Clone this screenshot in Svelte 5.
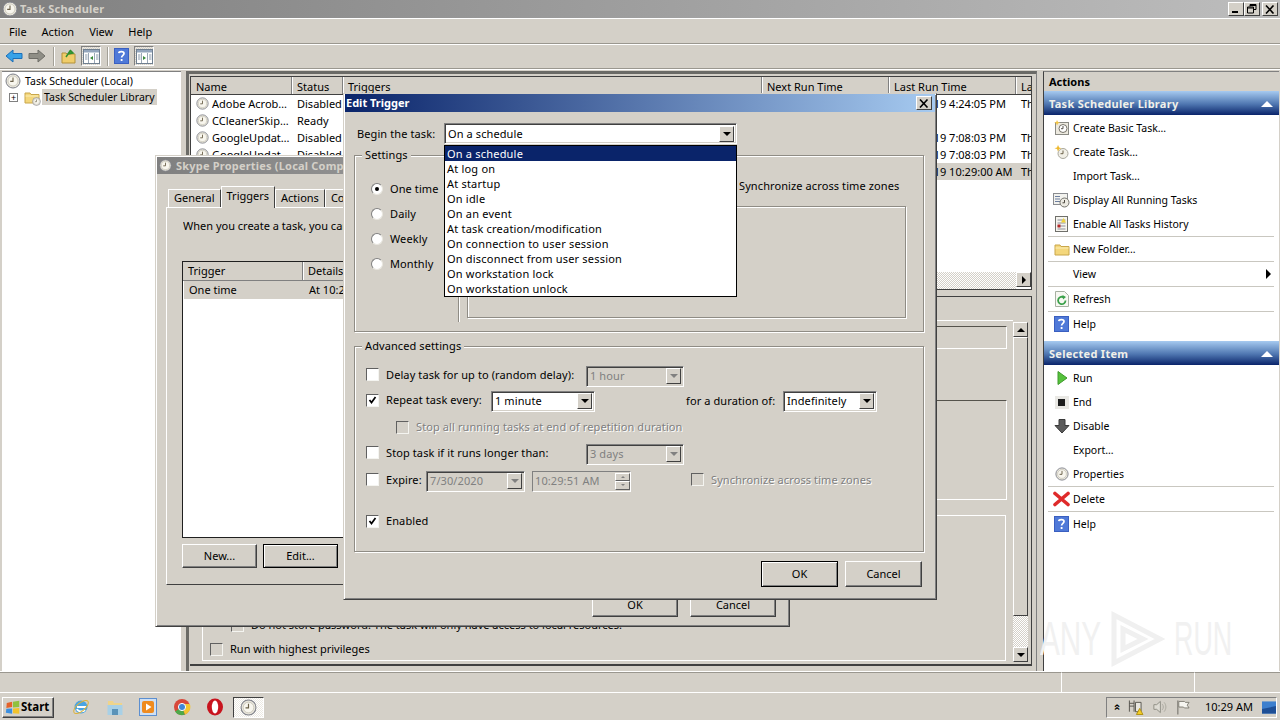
<script lang="ts">
  const menus = ['File', 'Action', 'View', 'Help'];

  const tasks = [
    { name: 'Adobe Acrob…', status: 'Disabled', last: '6/24/2019 4:24:05 PM', res: 'Th' },
    { name: 'CCleanerSkip…', status: 'Ready', last: '', res: '' },
    { name: 'GoogleUpdat…', status: 'Disabled', last: '7/29/2019 7:08:03 PM', res: 'Th' },
    { name: 'GoogleUpdat…', status: 'Disabled', last: '7/29/2019 7:08:03 PM', res: 'Th' },
    { name: 'Skype', status: 'Ready', last: '7/29/2019 10:29:00 AM', res: 'Th', selected: true }
  ];

  const libraryActions = [
    { label: 'Create Basic Task…', icon: 'basic' },
    { label: 'Create Task…', icon: 'create' },
    { label: 'Import Task…' },
    { label: 'Display All Running Tasks', icon: 'running' },
    { label: 'Enable All Tasks History', icon: 'history', sep: true },
    { label: 'New Folder…', icon: 'folder', sep: true },
    { label: 'View', arrow: true, sep: true },
    { label: 'Refresh', icon: 'refresh', sep: true },
    { label: 'Help', icon: 'help' }
  ];

  const itemActions = [
    { label: 'Run', icon: 'run' },
    { label: 'End', icon: 'end' },
    { label: 'Disable', icon: 'disable' },
    { label: 'Export…' },
    { label: 'Properties', icon: 'props', sep: true },
    { label: 'Delete', icon: 'delete', sep: true },
    { label: 'Help', icon: 'help' }
  ];

  const triggerKinds = [
    'On a schedule',
    'At log on',
    'At startup',
    'On idle',
    'On an event',
    'At task creation/modification',
    'On connection to user session',
    'On disconnect from user session',
    'On workstation lock',
    'On workstation unlock'
  ];

  const schedules = ['One time', 'Daily', 'Weekly', 'Monthly'];
</script>

{#snippet clock(size: number)}
  <svg width={size} height={size} viewBox="0 0 16 16" class="icon">
    <circle cx="8" cy="8" r="7" fill="#e9e6dc" stroke="#7d7f88" />
    <circle cx="8" cy="8" r="5" fill="#f8f6ee" stroke="#b9b7a8" stroke-width=".6" />
    <path d="M8 4.5V8.4H5.2" fill="none" stroke="#6a6048" stroke-width="1.1" />
  </svg>
{/snippet}

{#snippet folder(size: number)}
  <svg width={size} height={size} viewBox="0 0 16 16" class="icon">
    <path d="M1 4h5l1 1.5h8V14H1z" fill="#f4d77c" stroke="#c9a64a" />
    <path d="M1.5 7h13" stroke="#fbeeb8" />
  </svg>
{/snippet}

{#snippet helpIcon()}
  <svg width="15" height="16" viewBox="0 0 15 16" class="icon">
    <rect width="15" height="16" fill="#3a5fc0" />
    <rect x="1" y="1" width="13" height="14" fill="#4f79d8" />
    <path d="M4.8 5.2C5 3.2 10 3 10 5.6 10 7.4 7.6 7.4 7.6 9.6" fill="none" stroke="#fff" stroke-width="1.7" />
    <rect x="6.7" y="11" width="1.8" height="2" fill="#fff" />
  </svg>
{/snippet}

{#snippet actionIcon(name: string)}
  {#if name === 'help'}
    {@render helpIcon()}
  {:else if name === 'basic'}
    <svg width="16" height="16" viewBox="0 0 16 16" class="icon">
      <rect x="1.5" y="2.5" width="13" height="12" fill="#ece9df" stroke="#8a8a84" />
      <circle cx="9" cy="8.5" r="4" fill="#fff" stroke="#77736a" />
      <path d="M9 6v2.7H7" fill="none" stroke="#55504a" />
      <path d="M3 0l1 2 2 .6-2 .8-1 2-.8-2-2-.8 2-.6z" fill="#f3c648" />
    </svg>
  {:else if name === 'create'}
    <svg width="16" height="16" viewBox="0 0 16 16" class="icon">
      <circle cx="9" cy="9.5" r="5" fill="#f1efe6" stroke="#a9a79c" />
      <path d="M9 6.5v3.2H6.5" fill="none" stroke="#6a6048" />
      <path d="M4 1l1.2 2.4 2.4.8-2.4.9L4 7.6 3 5.1.5 4.2 3 3.4z" fill="#eeb92f" />
    </svg>
  {:else if name === 'running'}
    <svg width="17" height="16" viewBox="0 0 17 16" class="icon">
      <rect x=".5" y="1.5" width="14" height="11" fill="#f2f2ee" stroke="#8a8c90" />
      <path d="M2 4.5h5M2 7h5M2 9.500h5" stroke="#6d7fa0" />
      <circle cx="11.500" cy="10.500" r="4.500" fill="#eceae2" stroke="#74736c" />
      <path d="M11.500 8v2.800H9.500" fill="none" stroke="#4a463e" />
    </svg>
  {:else if name === 'history'}
    <svg width="15" height="16" viewBox="0 0 15 16" class="icon">
      <rect x="1.500" y=".5" width="12" height="15" fill="#f6f5ef" stroke="#6f6f6a" />
      <path d="M3.500 4h8M3.500 7h8M3.500 10h8M3.500 13h8" stroke="#8d8d99" />
      <rect x="3.500" y="8.500" width="3" height="3" fill="#b52a2a" />
      <path d="M9.500 2l2.500 4.500H7z" fill="#efd33a" />
    </svg>
  {:else if name === 'folder'}
    {@render folder(16)}
  {:else if name === 'refresh'}
    <svg width="14" height="16" viewBox="0 0 14 16" class="icon">
      <path d="M.5.500h9l4 4v11H.500z" fill="#f7f8f2" stroke="#a7b0a2" />
      <path d="M10.500 9.500A3.700 3.700 0 1 1 9 6.500" fill="none" stroke="#3aa04a" stroke-width="1.800" />
      <path d="M7.500 4l3.500 2-3 2.500z" fill="#3aa04a" />
    </svg>
  {:else if name === 'run'}
    <svg width="16" height="16" viewBox="0 0 16 16" class="icon">
      <path d="M4 1.500l9 6.500-9 6.500z" fill="#56c23c" stroke="#3f9a2c" />
    </svg>
  {:else if name === 'end'}
    <svg width="16" height="16" viewBox="0 0 16 16" class="icon">
      <rect x="1" y="2" width="14" height="13" fill="#e9e8e4" />
      <rect x="4" y="5" width="7" height="7" fill="#1d1d1d" />
    </svg>
  {:else if name === 'disable'}
    <svg width="16" height="16" viewBox="0 0 16 16" class="icon">
      <path d="M5 1.500h6v6h4l-7 7.500-7-7.500h4z" fill="#5c5c5c" stroke="#3a3a3a" />
    </svg>
  {:else if name === 'props'}
    {@render clock(14)}
  {:else if name === 'delete'}
    <svg width="17" height="16" viewBox="0 0 17 16" class="icon">
      <path d="M2 2.500l13 11M15 2.500l-13 11" stroke="#df2a2a" stroke-width="3.600" stroke-linecap="round" />
    </svg>
  {/if}
{/snippet}

{#snippet combo(text: string, width: number, disabled = false)}
  <div class="combo" class:disabled style="width: {width}px">
    <span class="combo-text">{text}</span>
    <span class="drop-btn"><i class="tri-down"></i></span>
  </div>
{/snippet}

{#snippet check(label: string, checked = false, disabled = false)}
  <label class="check" class:disabled>
    <span class="box">
      {#if checked}
        <svg width="11" height="11" viewBox="0 0 11 11"><path d="M2.500 5l2 2.500 4-5.500" fill="none" stroke="#000" stroke-width="1.700" /></svg>
      {/if}
    </span>
    <span>{label}</span>
  </label>
{/snippet}

{#snippet actionSection(title: string, items: any[])}
  <div class="section-head">
    <span>{title}</span>
    <i class="tri-up"></i>
  </div>
  <ul class="action-list">
    {#each items as item}
      <li class:sep={item.sep}>
        <span class="action-icon">
          {#if item.icon}{@render actionIcon(item.icon)}{/if}
        </span>
        <span class="action-label">{item.label}</span>
        {#if item.arrow}<i class="tri-right"></i>{/if}
      </li>
    {/each}
  </ul>
{/snippet}

<div class="screen">
  <header class="titlebar">
    {@render clock(16)}
    <span class="title-text">Task Scheduler</span>
    <div class="caption-btns">
      <button class="cap"><i class="min"></i></button>
      <button class="cap">
        <svg width="10" height="10" viewBox="0 0 10 10"><path d="M3 2.500V.5h6v5H7M.5 3h6v6h-6z" fill="none" stroke="#000" /><path d="M.5 4h6M3 1.500h6" stroke="#000" /></svg>
      </button>
      <button class="cap close">
        <svg width="10" height="9" viewBox="0 0 10 9"><path d="M1 .5l7.500 8M8.500 .5L1 8.500" stroke="#000" stroke-width="1.600" /></svg>
      </button>
    </div>
  </header>

  <nav class="menubar">
    {#each menus as m}<span>{m}</span>{/each}
  </nav>

  <div class="toolbar">
    <svg width="18" height="16" viewBox="0 0 18 16" class="tool"><path d="M1 8l7-6v3.500h9v5H8V14z" fill="#37a2e8" stroke="#1d6fb8" /></svg>
    <svg width="18" height="16" viewBox="0 0 18 16" class="tool fwd"><path d="M17 8l-7-6v3.500H1v5h9V14z" fill="#8f8e86" stroke="#6f6e68" /></svg>
    <span class="tool-sep"></span>
    <svg width="16" height="16" viewBox="0 0 16 16" class="tool up">
      <path d="M1 5h4l1 1h8v9H1z" fill="#f0cd6a" stroke="#b3913a" />
      <path d="M5 9l4-6M9 2l3 3-5 1" fill="#3da63d" stroke="#2f8f2f" stroke-width="1.500" />
    </svg>
    <span class="pressed first">
      <svg width="17" height="15" viewBox="0 0 17 15"><rect x=".5" y=".5" width="16" height="14" fill="#fff" stroke="#6f7f90" /><rect x="1" y="1" width="15" height="2.500" fill="#93a5bc" /><path d="M5.500 4v10M11.500 4v10" stroke="#9aa7b6" /><path d="M10 7l-3 2 3 2z" fill="#3a8a3a" /><path d="M2 6h2.500M2 8h2.500M2 10h2.500M13 6h2.500M13 8h2.500M13 10h2.500" stroke="#8898aa" /></svg>
    </span>
    <span class="tool-sep"></span>
    <span class="tool help">{@render helpIcon()}</span>
    <span class="pressed">
      <svg width="17" height="15" viewBox="0 0 17 15"><rect x=".5" y=".5" width="16" height="14" fill="#fff" stroke="#6f7f90" /><rect x="1" y="1" width="15" height="2.500" fill="#93a5bc" /><path d="M5.500 4v10M11.500 4v10" stroke="#9aa7b6" /><path d="M7 7l3 2-3 2z" fill="#3a8a3a" /><path d="M2 6h2.500M2 8h2.500M2 10h2.500M13 6h2.500M13 8h2.500M13 10h2.500" stroke="#8898aa" /></svg>
    </span>
  </div>

  <main class="workspace">
    <aside class="tree">
      <div class="tree-root">{@render clock(16)}<span>Task Scheduler (Local)</span></div>
      <div class="tree-item">
        <span class="expander">+</span>
        <span class="tree-folder">
          {@render folder(16)}
          <span class="mini-clock">{@render clock(9)}</span>
        </span>
        <span class="tree-label">Task Scheduler Library</span>
      </div>
    </aside>

    <section class="center">
      <div class="task-list">
        <div class="row head">
          <span>Name</span><span>Status</span><span>Triggers</span><span>Next Run Time</span><span>Last Run Time</span><span>La</span>
        </div>
        {#each tasks as t}
          <div class="row" class:selected={t.selected}>
            <span class="name">{@render clock(13)}{t.name}</span>
            <span>{t.status}</span>
            <span></span>
            <span></span>
            <span>{t.last}</span>
            <span>{t.res}</span>
          </div>
        {/each}
        <div class="hscroll">
          <span class="dither"></span>
          <button class="sb-btn"><i class="tri-right small"></i></button>
        </div>
      </div>

      <div class="detail">
        <div class="detail-page">
          <div class="panel p1"></div>
          <div class="panel p2"></div>
          <div class="panel p3">
            <div class="p3-rows">
              {@render check('Do not store password.  The task will only have access to local resources.')}
              <div class="highest">{@render check('Run with highest privileges')}</div>
            </div>
          </div>
        </div>
        <div class="vscroll">
          <button class="sb-btn"><i class="tri-up dark"></i></button>
          <span class="sb-thumb"></span>
          <span class="dither"></span>
          <button class="sb-btn"><i class="tri-down"></i></button>
        </div>
      </div>
    </section>

    <aside class="actions">
      <div class="actions-title">Actions</div>
      {@render actionSection('Task Scheduler Library', libraryActions)}
      <div class="gap"></div>
      {@render actionSection('Selected Item', itemActions)}
    </aside>
  </main>

  <div class="statusbar">
    <span class="status-cell grow"></span>
    <span class="status-cell mid"></span>
    <span class="status-cell end"></span>
  </div>

  <footer class="taskbar">
    <button class="start">
      <svg width="16" height="15" viewBox="0 0 18 16">
        <path d="M2 3l6-1.500v6L1.500 8.500z" fill="#e4622a" />
        <path d="M9 1.500l7 -1v7l-7 .5z" fill="#8fc13e" />
        <path d="M1.500 9.500L8 9v6l-7 -1z" fill="#3b8fe0" />
        <path d="M9 9l7 -.5V15l-7-.5z" fill="#f2c32c" />
      </svg>
      <b>Start</b>
    </button>

    <div class="quick">
      <svg width="18" height="18" viewBox="0 0 18 18"><circle cx="9" cy="9" r="6.500" fill="#4aa4e2" /><path d="M5 9h9M5 11c1 3 6 3 8 1" stroke="#fff" stroke-width="1.800" fill="none" /><ellipse cx="9" cy="9" rx="9" ry="4" fill="none" stroke="#dcb23a" transform="rotate(-40 9 9)" /></svg>
      <svg width="18" height="18" viewBox="0 0 18 18"><path d="M2 3h5l1 2h8v4H2z" fill="#efd48a" /><rect x="1.500" y="7" width="15" height="10" fill="#a8d0e6" /><rect x="6" y="11" width="6" height="6" fill="#5b93b8" /></svg>
      <svg width="18" height="18" viewBox="0 0 18 18"><rect x=".5" y=".5" width="17" height="17" fill="#cfe0f4" stroke="#5c8fd0" /><rect x="3" y="3" width="12" height="12" rx="2" fill="#ef8b1f" /><path d="M7 5.500L12.500 9 7 12.500z" fill="#fff" /></svg>
      <svg width="18" height="18" viewBox="0 0 18 18"><circle cx="9" cy="9" r="8" fill="#d8483a" /><path d="M9 9L2 13.500A8 8 0 0 0 12 16.500z" fill="#4ea848" /><path d="M9 9l3 7.500A8 8 0 0 0 16.800 6H9z" fill="#f2c530" /><circle cx="9" cy="9" r="3.600" fill="#3f86d8" stroke="#fff" /></svg>
      <svg width="18" height="18" viewBox="0 0 18 18"><ellipse cx="9" cy="9" rx="8" ry="8.500" fill="#c8141e" /><ellipse cx="9" cy="9" rx="3.200" ry="6.500" fill="#fff" /></svg>
    </div>
    <span class="task-active">{@render clock(17)}</span>

    <div class="tray">
      <span class="tray-chevron">»</span>
      <svg width="17" height="17" viewBox="0 0 17 17"><path d="M1.500 1v12M6.500 1v12M1.500 4h5M1.500 7h5" stroke="#55534c" fill="none" /><path d="M8 3h6v10H8z" fill="#e8e6df" stroke="#55534c" /><path d="M9 16l3.500-6.500L16 16z" fill="#f2cc24" stroke="#b08f10" /></svg>
      <svg width="17" height="16" viewBox="0 0 17 16"><path d="M2 5.500h3l4-3.500v12L5 10.500H2z" fill="#dedcd4" stroke="#8f8d84" /><path d="M11 5c1.500 2 1.500 4 0 6M13 3c2.500 3 2.500 7 0 10" fill="none" stroke="#a9a79e" /></svg>
      <svg width="16" height="17" viewBox="0 0 16 17"><path d="M2 1v15" stroke="#66645c" /><path d="M3 2h6l1 1h4l-2 3 2 3H9l-1-1H3z" fill="#f6f5f0" stroke="#7d7b72" /></svg>
      <span class="clock-text">10:29 AM</span>
      <svg width="15" height="13" viewBox="0 0 15 13"><rect width="15" height="13" fill="#3d7fce" /><path d="M0 8l15-3v8H0z" fill="#1e4f96" /></svg>
    </div>
  </footer>

  <section class="win skype">
    <div class="win-title inactive">
      {@render clock(13)}
      <span>Skype Properties (Local Computer)</span>
    </div>
    <div class="skype-body">
      <div class="tabs">
        <span class="tab">General</span>
        <span class="tab active">Triggers</span>
        <span class="tab">Actions</span>
        <span class="tab">Conditions</span>
      </div>
      <div class="tab-page">
        <p class="intro">When you create a task, you can specify the conditions that will trigger the task.</p>
        <div class="trigger-list">
          <div class="trigger-head"><span>Trigger</span><span>Details</span></div>
          <div class="trigger-row"><span>One time</span><span>At 10:29 AM on 7/29/2019</span></div>
        </div>
        <div class="list-btns">
          <button class="btn">New...</button>
          <button class="btn default">Edit...</button>
        </div>
      </div>
      <div class="win-footer">
        <button class="btn short">OK</button>
        <button class="btn short">Cancel</button>
      </div>
    </div>
  </section>

  <section class="win edit">
    <div class="win-title active-title">
      <span>Edit Trigger</span>
      <button class="cap small-close">
        <svg width="10" height="9" viewBox="0 0 10 9"><path d="M1 .5l7.500 8M8.500 .5L1 8.500" stroke="#000" stroke-width="1.600" /></svg>
      </button>
    </div>
    <div class="edit-body">
      <div class="begin-row">
        <span class="begin-label">Begin the task:</span>
        {@render combo('On a schedule', 293)}
      </div>

      <div class="group settings">
        <span class="legend">Settings</span>
        <div class="radios">
          {#each schedules as s, i}
            <label class="radio">
              <span class="dot" class:on={i === 0}></span>
              <span>{s}</span>
            </label>
          {/each}
        </div>
        <span class="vline"></span>
        <div class="settings-right">
          <div class="sync">Synchronize across time zones</div>
          <div class="recur-box"></div>
        </div>
      </div>

      <div class="group advanced">
        <span class="legend">Advanced settings</span>
        <div class="adv-row first-row">
          <span class="col-a">{@render check('Delay task for up to (random delay):')}</span>
          {@render combo('1 hour', 98, true)}
        </div>
        <div class="adv-row">
          <span class="col-repeat">{@render check('Repeat task every:', true)}</span>
          {@render combo('1 minute', 104)}
          <span class="duration">for a duration of:</span>
          {@render combo('Indefinitely', 94)}
        </div>
        <div class="adv-row indent">
          {@render check('Stop all running tasks at end of repetition duration', false, true)}
        </div>
        <div class="adv-row stop">
          <span class="col-a">{@render check('Stop task if it runs longer than:')}</span>
          {@render combo('3 days', 98, true)}
        </div>
        <div class="adv-row expire">
          <span class="col-expire">{@render check('Expire:')}</span>
          {@render combo('7/30/2020', 99, true)}
          <div class="spin-field">
            <span>10:29:51 AM</span>
            <span class="spin"><i class="spin-up"></i><i class="spin-down"></i></span>
          </div>
          <span class="expire-sync">{@render check('Synchronize across time zones', false, true)}</span>
        </div>
        <div class="adv-row enabled">{@render check('Enabled', true)}</div>
      </div>

      <div class="win-footer edit-footer">
        <button class="btn default wide">OK</button>
        <button class="btn wide">Cancel</button>
      </div>
    </div>
  </section>

  <ul class="dropdown">
    {#each triggerKinds as kind, i}
      <li class:hl={i === 0}>{kind}</li>
    {/each}
  </ul>

  <div class="watermark" aria-hidden="true">
    <span class="wm-word">ANY</span>
    <svg width="58" height="60" viewBox="0 0 58 60"><path d="M6 6v48l46-24z M15 20v20l20-10z" fill="none" stroke="#f0f0f0" stroke-width="5" /></svg>
    <span class="wm-word run">RUN</span>
  </div>
</div>

<style>
  :global(body) {
    margin: 0;
    background: #d4d0c8;
  }

  .screen {
    position: relative;
    width: 1280px;
    height: 720px;
    overflow: hidden;
    display: flex;
    flex-direction: column;
    background: #d4d0c8;
    color: #000;
    font-family: 'Noto Sans', 'DejaVu Sans', sans-serif;
    font-size: 11px;
    line-height: 14px;
  }

  button {
    font: inherit;
    color: inherit;
    padding: 0;
    margin: 0;
    background: #d4d0c8;
  }

  ul {
    list-style: none;
    margin: 0;
    padding: 0;
  }

  .icon {
    flex: none;
    display: block;
  }

  .tri-down,
  .tri-up,
  .tri-right {
    display: block;
    width: 0;
    height: 0;
    border-style: solid;
    border-color: transparent;
  }

  .tri-down {
    border-width: 4px 4px 0;
    border-top-color: #000;
  }

  .tri-up {
    border-width: 0 6px 6px;
    border-bottom-color: #fff;
  }

  .tri-up.dark {
    border-width: 0 4px 4px;
    border-bottom-color: #000;
  }

  .tri-right {
    border-width: 5px 0 5px 5px;
    border-left-color: #000;
  }

  .tri-right.small {
    border-width: 4px 0 4px 4px;
  }

  /* main window chrome */
  .titlebar {
    height: 18px;
    display: flex;
    align-items: center;
    gap: 2px;
    padding-left: 2px;
    background: linear-gradient(90deg, #808080, #bdbdbd);
    border-bottom: 1px solid #fff;
    flex: none;
  }

  .title-text {
    font-weight: 700;
    color: #d4d0c8;
    letter-spacing: 0.2px;
  }

  .caption-btns {
    margin-left: auto;
    display: flex;
    margin-right: 2px;
  }

  .cap {
    width: 16px;
    height: 14px;
    display: flex;
    align-items: center;
    justify-content: center;
    border: 1px solid;
    border-color: #fff #404040 #404040 #fff;
  }

  .caption-btns .close {
    margin-left: 2px;
  }

  .min {
    display: block;
    width: 6px;
    height: 2px;
    background: #000;
    margin-top: 6px;
    margin-right: 2px;
  }

  .menubar {
    height: 25px;
    box-sizing: border-box;
    display: flex;
    align-items: center;
    padding: 1px 0 0 9px;
    gap: 15px;
    flex: none;
    border-bottom: 1px solid #9a978f;
    box-shadow: inset 0 -1px 0 #d4d0c8, 0 1px 0 #fff;
  }

  .toolbar {
    height: 24px;
    display: flex;
    align-items: center;
    flex: none;
    padding-left: 5px;
    border-bottom: 1px solid #9a978f;
    box-shadow: 0 1px 0 #fff;
  }

  .tool-sep {
    width: 1px;
    height: 19px;
    background: #a3a097;
    box-shadow: 1px 0 0 #fff;
  }

  .fwd {
    margin-left: 5px;
    margin-right: 7px;
  }

  .up {
    margin-left: 7px;
  }

  .pressed {
    width: 20px;
    height: 20px;
    margin-left: 5px;
    margin-right: 5px;
    display: flex;
    align-items: center;
    justify-content: center;
    background: repeating-conic-gradient(#ece9e2 0 25%, #d4d0c8 0 50%) 0 0/2px 2px;
    border: 1px solid;
    border-color: #808080 #fff #fff #808080;
    box-sizing: border-box;
  }

  .pressed.first {
    margin-left: 4px;
    margin-right: 6px;
  }

  .help {
    margin-left: 6px;
    margin-right: 0;
  }

  .workspace {
    flex: 1;
    display: flex;
    min-height: 0;
    padding-top: 2px;
  }

  /* left tree */
  .tree {
    width: 179px;
    margin-left: 2px;
    background: #fff;
    border-top: 1px solid #808080;
    padding: 1px 0 0 3px;
    box-sizing: border-box;
    flex: none;
    font-size: 10.5px;
  }

  .tree-root {
    display: flex;
    align-items: center;
    gap: 4px;
    height: 16px;
  }

  .tree-item {
    display: flex;
    align-items: center;
    height: 16px;
    margin-top: 0;
  }

  .expander {
    width: 7px;
    height: 7px;
    margin-left: 4px;
    border: 1px solid #808080;
    font-size: 9px;
    line-height: 7px;
    text-align: center;
    flex: none;
  }

  .tree-folder {
    position: relative;
    margin-left: 6px;
    display: block;
  }

  .mini-clock {
    position: absolute;
    right: -1px;
    bottom: -1px;
  }

  .tree-label {
    margin-left: 2px;
    padding: 1px 2px;
    background: #d4d0c8;
  }

  /* center pane */
  .center {
    width: 851px;
    margin-left: 5px;
    flex: none;
    display: flex;
    flex-direction: column;
    box-sizing: border-box;
    padding: 2px 4px 5px 1px;
    border: 1px solid #808080;
    border-top: 3px solid #6a6a66;
    border-left: 3px solid #6a6a66;
    border-bottom: 0;
  }

  .task-list {
    height: 212px;
    flex: none;
    background: #fff;
    border: 1px solid #404040;
    position: relative;
    overflow: hidden;
  }

  .row {
    display: grid;
    grid-template-columns: 101px 51px 419px 127px 127px 17px;
    height: 17px;
    align-items: center;
    white-space: nowrap;
  }

  .row > span {
    padding-left: 5px;
    overflow: hidden;
  }

  .row.head {
    height: 17px;
    background: #d4d0c8;
    border-bottom: 1px solid #404040;
  }

  .row.head > span {
    border-right: 1px solid #808080;
    box-shadow: 1px 0 0 #fff;
    height: 17px;
    line-height: 19px;
  }

  .row .name {
    display: flex;
    align-items: center;
    gap: 3px;
    padding-left: 5px;
  }

  .row.selected {
    background: #d4d0c8;
  }

  .hscroll {
    position: absolute;
    left: 0;
    right: 0;
    bottom: 0;
    height: 17px;
    display: flex;
    justify-content: flex-end;
  }

  .dither {
    flex: 1;
    display: block;
    background: repeating-conic-gradient(#fff 0 25%, #d4d0c8 0 50%) 0 0/2px 2px;
  }

  .sb-btn {
    width: 15px;
    height: 15px;
    flex: none;
    display: flex;
    align-items: center;
    justify-content: center;
    border: 1px solid;
    border-color: #fff #404040 #404040 #fff;
    box-sizing: border-box;
  }

  .detail {
    flex: 1;
    margin-top: 6px;
    min-height: 0;
    display: flex;
    border-top: 1px solid #404040;
    border-bottom: 2px solid #404040;
    border-right: 1px solid #404040;
    padding: 23px 3px 2px 0;
    box-sizing: border-box;
    position: relative;
  }

  .detail-page {
    flex: 1;
    padding: 5px 6px 0 12px;
    border-top: 1px solid #fff;
    display: flex;
    flex-direction: column;
    min-width: 0;
  }

  .panel {
    border: 1px solid #fff;
    border-top: 1px solid #55534c;
    box-sizing: border-box;
    flex: none;
  }

  .p1 {
    height: 23px;
  }

  .p2 {
    height: 100px;
    margin-top: 51px;
  }

  .p3 {
    height: 146px;
    margin-top: 15px;
    margin-right: 1px;
    border-top-color: #fff;
    position: relative;
  }

  .p3-rows {
    margin-top: 102px;
    padding-left: 28px;
    display: flex;
    flex-direction: column;
    gap: 10px;
  }

  .p3-rows .box {
    background: #d4d0c8;
  }

  .highest {
    margin-left: -21px;
  }

  .vscroll {
    width: 15px;
    flex: none;
    display: flex;
    flex-direction: column;
    margin-top: 2px;
  }

  .sb-thumb {
    height: 279px;
    display: block;
    box-sizing: border-box;
    border: 1px solid;
    border-color: #fff #404040 #404040 #fff;
    flex: none;
  }

  /* right actions */
  .actions {
    width: 236px;
    margin-left: 6px;
    flex: none;
    background: #fff;
    border-left: 1px solid #404040;
    border-top: 1px solid #808080;
    box-sizing: border-box;
    display: flex;
    flex-direction: column;
    margin-right: 2px;
  }

  .actions-title {
    height: 19px;
    line-height: 20px;
    padding-left: 5px;
    font-weight: 700;
    background: #d4d0c8;
    flex: none;
  }

  .section-head {
    height: 24px;
    box-sizing: border-box;
    flex: none;
    display: flex;
    align-items: center;
    justify-content: space-between;
    padding: 1px 6px 0 5px;
    font-weight: 700;
    letter-spacing: 0.28px;
    color: #f0f0ea;
    background: linear-gradient(#a6caf0, #4e76b0 55%, #0a246a);
  }

  .action-list {
    padding-top: 1px;
  }

  .action-list li {
    position: relative;
    height: 24px;
    display: flex;
    align-items: center;
    padding-right: 8px;
    font-size: 10.5px;
  }

  .action-list li.sep {
    height: 25px;
    padding-bottom: 1px;
    box-sizing: border-box;
  }

  .action-list li.sep::after {
    content: '';
    position: absolute;
    left: 4px;
    right: 5px;
    bottom: 0;
    height: 1px;
    background: #c9c7c0;
  }

  .action-icon {
    width: 28px;
    padding-left: 7px;
    box-sizing: border-box;
    display: flex;
    justify-content: center;
    flex: none;
  }

  .action-label {
    margin-left: 1px;
    flex: 1;
  }

  .gap {
    height: 5px;
    flex: none;
  }

  .statusbar {
    height: 20px;
    flex: none;
    display: flex;
    border-top: 1px solid #fff;
    border-bottom: 1px solid #fff;
  }

  .status-cell {
    display: block;
    border-top: 1px solid #9a978f;
  }

  .grow {
    flex: 1;
  }

  .mid {
    width: 132px;
    border-left: 1px solid #fff;
    border-right: 1px solid #fff;
  }

  .end {
    width: 85px;
  }

  /* taskbar */
  .taskbar {
    height: 26px;
    margin-top: 1px;
    flex: none;
    display: flex;
    align-items: center;
    padding-left: 2px;
    position: relative;
  }

  .start {
    width: 52px;
    height: 21px;
    display: flex;
    align-items: center;
    padding-left: 2px;
    border: 1px solid;
    border-color: #fff #404040 #404040 #fff;
    box-shadow: inset -1px -1px 0 #808080;
    font-size: 11.5px;
  }

  .quick {
    display: flex;
    gap: 15.500px;
    margin-left: 18px;
  }

  .task-active {
    margin-left: 9px;
    width: 31px;
    height: 21px;
    display: flex;
    align-items: center;
    justify-content: center;
    box-sizing: border-box;
    border: 1px solid;
    border-color: #404040 #fff #fff #404040;
    background: repeating-conic-gradient(#fff 0 25%, #ece9e2 0 50%) 0 0/2px 2px;
  }

  .tray {
    margin-left: auto;
    margin-right: 3px;
    width: 171px;
    height: 21px;
    box-sizing: border-box;
    display: flex;
    align-items: center;
    border: 1px solid;
    border-color: #808080 #fff #fff #808080;
    padding-left: 4px;
    gap: 8px;
  }

  .tray-chevron {
    transform: rotate(-90deg);
    font-size: 11px;
    font-weight: 700;
    width: 10px;
    text-align: center;
  }

  .clock-text {
    margin-left: 6px;
    margin-right: 1px;
    white-space: nowrap;
  }

  /* floating windows */
  .win {
    position: absolute;
    isolation: isolate;
    box-sizing: border-box;
    background: #d4d0c8;
    border: 1px solid;
    border-color: #d4d0c8 #404040 #404040 #d4d0c8;
    box-shadow: inset 1px 1px 0 #fff, inset -1px -1px 0 #808080;
    padding: 0 1px 1px;
    display: flex;
    flex-direction: column;
  }

  .win-title {
    height: 18px;
    flex: none;
    display: flex;
    align-items: center;
    font-weight: 700;
    padding-left: 1px;
    white-space: nowrap;
    overflow: hidden;
  }

  .inactive {
    height: 17px;
    padding-left: 2px;
    background: linear-gradient(90deg, #808080, #b5b5b5);
    color: #d4d0c8;
    gap: 4px;
    letter-spacing: 0.2px;
  }

  .active-title {
    background: linear-gradient(90deg, #0a246a, #a6caf0);
    color: #fff;
    justify-content: space-between;
    padding-right: 3px;
  }

  .small-close {
    color: #000;
  }

  .skype {
    left: 155px;
    top: 155px;
    width: 635px;
    height: 472px;
    padding-top: 1px;
  }

  .skype-body {
    flex: 1;
    padding: 12px 12px 0 9px;
    display: flex;
    flex-direction: column;
  }

  .tabs {
    display: flex;
    align-items: flex-end;
    height: 21px;
    padding-left: 2px;
    flex: none;
  }

  .tab {
    height: 18px;
    line-height: 16px;
    padding: 0 5px;
    border: 1px solid;
    border-color: #fff #404040 transparent #fff;
    border-bottom: 0;
    box-sizing: border-box;
  }

  .tab.active {
    height: 22px;
    line-height: 18px;
    margin-bottom: -1px;
    background: #d4d0c8;
    position: relative;
    z-index: 1;
  }

  .tab-page {
    height: 378px;
    flex: none;
    box-sizing: border-box;
    border: 1px solid;
    border-color: #fff #404040 #404040 #fff;
    padding: 11px 15px 0 15px;
  }

  .intro {
    margin: 0 0 0 1px;
    white-space: nowrap;
    overflow: hidden;
  }

  .trigger-list {
    margin-top: 28px;
    height: 277px;
    box-sizing: border-box;
    background: #fff;
    border: 1px solid #202020;
  }

  .trigger-head {
    height: 18px;
    display: grid;
    grid-template-columns: 120px 1fr;
    background: #d4d0c8;
    border-bottom: 1px solid #808080;
  }

  .trigger-head span {
    padding-left: 5px;
    line-height: 18px;
    border-right: 1px solid #808080;
    box-shadow: 1px 0 0 #fff;
  }

  .trigger-row {
    display: grid;
    grid-template-columns: 120px 1fr;
    height: 18px;
    margin: 0 0 0 1px;
    align-items: center;
    background: #d4d0c8;
    white-space: nowrap;
  }

  .trigger-row span {
    padding-left: 5px;
  }

  .list-btns {
    display: flex;
    gap: 6px;
    margin-top: 6px;
  }

  .btn {
    width: 75px;
    height: 24px;
    box-sizing: border-box;
    border: 1px solid;
    border-color: #fff #404040 #404040 #fff;
    box-shadow: inset -1px -1px 0 #808080;
  }

  .btn.default {
    border: 1px solid #000;
    box-shadow: inset 1px 1px 0 #fff, inset -1px -1px 0 #808080;
  }

  .btn.short {
    width: 86px;
  }

  .win-footer {
    display: flex;
    justify-content: flex-end;
    gap: 12px;
    margin-top: 8px;
  }

  .edit {
    left: 343px;
    top: 93px;
    width: 594px;
    height: 507px;
  }

  .edit-body {
    flex: 1;
    padding: 11px 0 0 9px;
    display: flex;
    flex-direction: column;
    letter-spacing: 0.1px;
  }

  .begin-row {
    display: flex;
    align-items: center;
    height: 21px;
    flex: none;
  }

  .begin-label {
    margin-left: 3px;
    width: 87px;
  }

  .combo {
    height: 21px;
    box-sizing: border-box;
    flex: none;
    display: flex;
    align-items: center;
    background: #fff;
    border: 1px solid;
    border-color: #808080 #fff #fff #808080;
    box-shadow: inset 1px 1px 0 #404040, inset -1px -1px 0 #d4d0c8;
    padding: 2px;
  }

  .combo-text {
    flex: 1;
    padding-left: 1px;
    white-space: nowrap;
  }

  .combo.disabled {
    background: #d4d0c8;
    color: #808080;
  }

  .drop-btn {
    width: 15px;
    height: 16px;
    flex: none;
    display: flex;
    align-items: center;
    justify-content: center;
    box-sizing: border-box;
    background: #d4d0c8;
    border: 1px solid;
    border-color: #fff #404040 #404040 #fff;
  }

  .combo.disabled .tri-down {
    border-top-color: #808080;
  }

  .group {
    position: relative;
    box-sizing: border-box;
    width: 570px;
    border: 1px solid #8f8c85;
    box-shadow: inset 1px 1px 0 #fff, 1px 1px 0 #fff;
    flex: none;
  }

  .legend {
    position: absolute;
    top: -8px;
    left: 7px;
    padding: 0 3px;
    background: #d4d0c8;
    white-space: nowrap;
  }

  .settings {
    height: 177px;
    margin-top: 11px;
    display: flex;
    padding: 20px 0 0 16px;
  }

  .radios {
    width: 87px;
    flex: none;
    display: flex;
    flex-direction: column;
  }

  .radio {
    height: 25px;
    display: flex;
    align-items: center;
    gap: 7px;
    white-space: nowrap;
  }

  .dot {
    width: 12px;
    height: 12px;
    box-sizing: border-box;
    border-radius: 50%;
    background: #fff;
    border: 1px solid #808080;
    border-right-color: #e8e6df;
    border-bottom-color: #e8e6df;
    display: flex;
    align-items: center;
    justify-content: center;
    flex: none;
  }

  .dot.on::after {
    content: '';
    width: 4px;
    height: 4px;
    border-radius: 50%;
    background: #000;
  }

  .vline {
    width: 1px;
    height: 146px;
    background: #8f8c85;
    box-shadow: 1px 0 0 #fff;
    flex: none;
  }

  .settings-right {
    margin-left: 8px;
    width: 439px;
    flex: none;
    display: flex;
    flex-direction: column;
  }

  .sync {
    height: 24px;
    padding-left: 272px;
    line-height: 20px;
    white-space: nowrap;
  }

  .recur-box {
    height: 112px;
    margin-top: 6px;
    border: 1px solid #8f8c85;
    box-shadow: inset 1px 1px 0 #fff, 1px 1px 0 #fff;
    box-sizing: border-box;
  }

  .advanced {
    height: 206px;
    margin-top: 14px;
    padding: 17px 0 0 11px;
  }

  .adv-row {
    height: 26px;
    display: flex;
    align-items: center;
    white-space: nowrap;
  }

  .adv-row.first-row {
    height: 24px;
  }

  .col-a {
    width: 220px;
    flex: none;
  }

  .col-repeat {
    width: 125px;
    flex: none;
  }

  .col-expire {
    width: 60px;
    flex: none;
  }

  .duration {
    margin-left: 91px;
    width: 97px;
    flex: none;
  }

  .indent {
    padding-left: 30px;
  }

  .stop,
  .expire {
    margin-top: 1px;
  }

  .enabled {
    margin-top: 14px;
  }

  .check {
    display: inline-flex;
    align-items: center;
    gap: 7px;
    white-space: nowrap;
  }

  .check.disabled {
    color: #808080;
    text-shadow: 1px 1px 0 #fff;
  }

  .box {
    width: 13px;
    height: 13px;
    box-sizing: border-box;
    flex: none;
    display: flex;
    align-items: center;
    justify-content: center;
    background: #fff;
    border: 1px solid;
    border-color: #606060 #f4f4f0 #f4f4f0 #606060;
  }

  .check.disabled .box {
    background: #d4d0c8;
  }

  .spin-field {
    margin-left: 7px;
    width: 99px;
    height: 21px;
    box-sizing: border-box;
    display: flex;
    align-items: center;
    padding-left: 2px;
    color: #808080;
    border: 1px solid;
    border-color: #808080 #fff #fff #808080;
    flex: none;
  }

  .spin-field > span:first-child {
    flex: 1;
  }

  .spin {
    width: 15px;
    height: 17px;
    display: flex;
    flex-direction: column;
  }

  .spin i {
    flex: 1;
    display: flex;
    align-items: center;
    justify-content: center;
    border: 1px solid;
    border-color: #fff #606060 #606060 #fff;
  }

  .spin i::after {
    content: '';
    width: 0;
    height: 0;
    border-left: 2px solid transparent;
    border-right: 2px solid transparent;
  }

  .spin-up::after {
    border-bottom: 2px solid #808080;
  }

  .spin-down::after {
    border-top: 2px solid #808080;
  }

  .expire-sync {
    margin-left: 60px;
  }

  .edit-footer {
    margin: 9px 0 0 0;
    padding-right: 13px;
    gap: 7px;
  }

  .btn.wide {
    width: 77px;
    height: 26px;
  }

  /* open combo list */
  .dropdown {
    position: absolute;
    left: 444px;
    top: 145px;
    width: 293px;
    box-sizing: border-box;
    background: #fff;
    border: 1px solid #000;
    letter-spacing: 0.2px;
  }

  .dropdown li {
    height: 15px;
    line-height: 15px;
    padding-left: 2px;
  }

  .dropdown .hl {
    background: #0a246a;
    color: #fff;
  }

  .watermark {
    position: absolute;
    left: 1040px;
    top: 609px;
    display: flex;
    align-items: center;
    gap: 8px;
    color: #f1f1f1;
    font-family: 'Liberation Sans', sans-serif;
    font-size: 48px;
    line-height: 60px;
    pointer-events: none;
  }

  .wm-word {
    width: 60px;
    display: block;
    transform: scaleX(0.62);
    transform-origin: left center;
  }

  .wm-word.run {
    transform: scaleX(0.56);
  }
</style>
